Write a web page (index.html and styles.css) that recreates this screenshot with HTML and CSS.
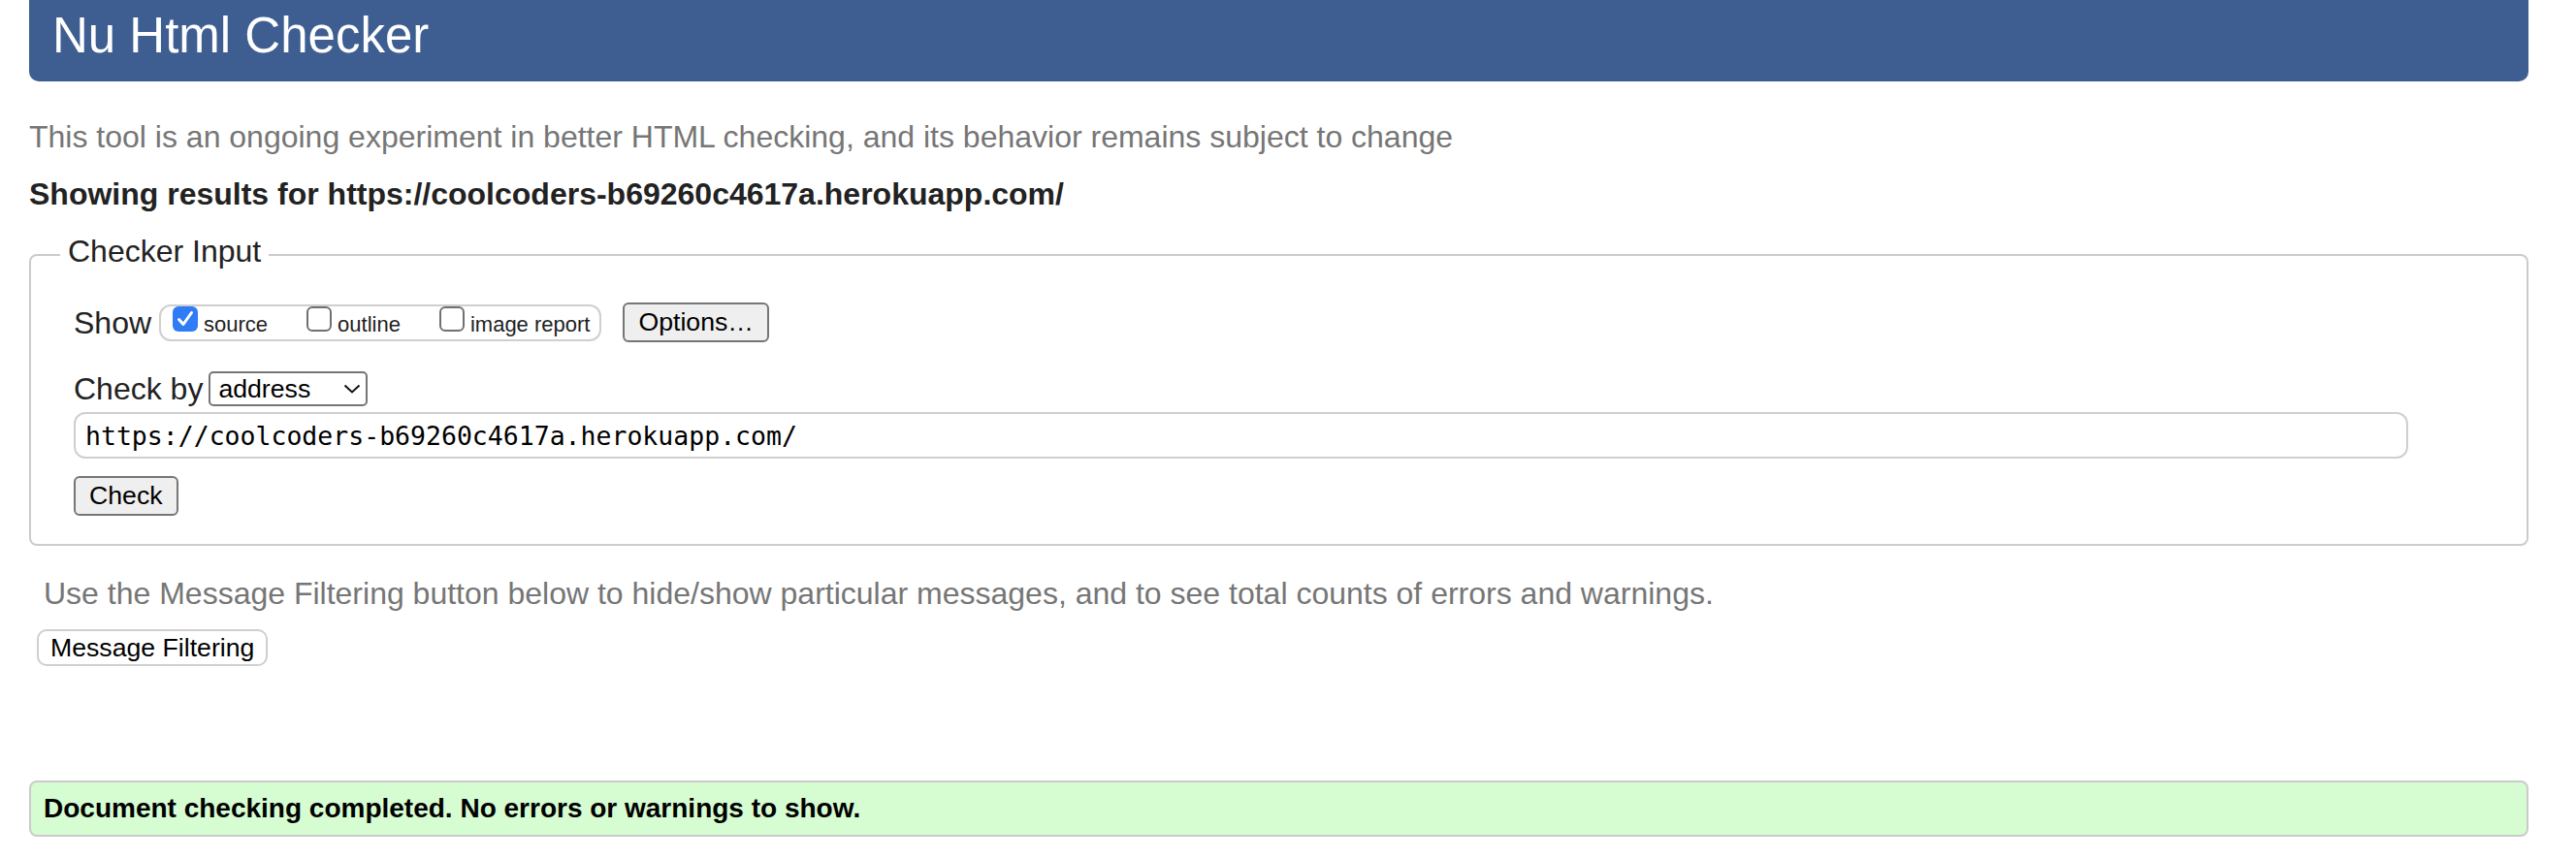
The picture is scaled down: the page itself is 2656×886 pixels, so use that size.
FILE: index.html
```html
<!DOCTYPE html>
<html lang="en">
<head>
<meta charset="utf-8">
<title>Nu Html Checker</title>
<link rel="stylesheet" href="styles.css">
</head>
<body>
<h1 class="title">Nu Html Checker</h1>
<p class="intro">This tool is an ongoing experiment in better HTML checking, and its behavior remains subject to change</p>
<p class="results-for">Showing results for https://coolcoders-b69260c4617a.herokuapp.com/</p>
<form class="checker">
  <fieldset class="input-box">
    <legend class="legend">Checker Input</legend>
    <div class="row show-row">
      <span class="row-label">Show</span>
      <div class="opts">
        <label class="opt"><span class="box box-on"><svg width="26" height="26" viewBox="0 0 26 26"><path d="M6.5 13.5 L11 18.5 L19.5 6.5" fill="none" stroke="#fff" stroke-width="3" stroke-linecap="round" stroke-linejoin="round"/></svg></span>source</label>
        <label class="opt"><span class="box"></span>outline</label>
        <label class="opt opt-last"><span class="box"></span>image report</label>
      </div>
      <button type="button" class="btn btn-options">Options…</button>
    </div>
    <div class="row by-row">
      <span class="row-label by-label">Check by</span>
      <span class="select-wrap">
        <select class="select"><option>address</option></select>
        <svg class="chev" width="18" height="10" viewBox="0 0 18 10"><path d="M1.5 1.5 L9 8.5 L16.5 1.5" fill="none" stroke="#111" stroke-width="2"/></svg>
      </span>
    </div>
    <input class="url" type="text" value="https://coolcoders-b69260c4617a.herokuapp.com/">
    <button type="button" class="btn btn-check">Check</button>
  </fieldset>
</form>
<p class="filter-hint">Use the Message Filtering button below to hide/show particular messages, and to see total counts of errors and warnings.</p>
<button type="button" class="btn-filter">Message Filtering</button>
<div class="success">Document checking completed. No errors or warnings to show.</div>
</body>
</html>
```
FILE: styles.css
```css
html, body {
  background: #fff;
}
body {
  margin: 0;
  padding: 0 49px 0 30px;
  font-family: "Liberation Sans", Arial, Helvetica, sans-serif;
  color: #222;
}
.title {
  margin: 0;
  height: 84px;
  box-sizing: border-box;
  padding: 8px 24px 18px;
  font-size: 51px;
  line-height: 58px;
  font-weight: normal;
  color: #fff;
  background: #3e5e92;
  border-radius: 0 0 10px 10px;
}
.intro {
  margin: 39px 0 0;
  font-size: 32px;
  line-height: 36px;
  color: #767676;
}
.results-for {
  margin: 23px 0 0;
  font-size: 32px;
  line-height: 36px;
  font-weight: bold;
  color: #222;
}
.checker {
  margin: 0;
}
.input-box {
  margin: 23px 0 0;
  padding: 0 122px 29px 44px;
  border: 2px solid #cbcbcb;
  border-radius: 8px;
  min-width: 0;
}
.legend {
  margin-left: -14px;
  padding: 0 8px 8px;
  font-size: 32px;
  line-height: 36px;
  color: #222;
}
.row {
  display: flex;
  align-items: center;
}
.show-row {
  margin-top: 27px;
}
.row-label {
  font-size: 32px;
  line-height: 36px;
  margin-right: 8px;
}
.by-label {
  margin-right: 6px;
}
.opts {
  display: flex;
  align-items: flex-start;
  height: 38px;
  box-sizing: border-box;
  padding: 0 10px 0 12px;
  border: 2px solid #cfcfcf;
  border-radius: 12px;
}
.opt {
  display: block;
  font-size: 22px;
  color: #222;
  margin-right: 40px;
  white-space: nowrap;
}
.opt-last {
  margin-right: 0;
}
.box {
  display: inline-block;
  vertical-align: baseline;
  width: 26px;
  height: 26px;
  box-sizing: border-box;
  margin-right: 6px;
  border: 2px solid #707070;
  border-radius: 6px;
  background: #fff;
}
.box-on {
  border: none;
  background: #2f7cf6;
}
.box-on svg {
  display: block;
}
.btn {
  font-family: "Liberation Sans", Arial, Helvetica, sans-serif;
  font-size: 26.67px;
  color: #000;
  background: #efefef;
  border: 2px solid #767676;
  border-radius: 6px;
  height: 41px;
  padding: 0 14px;
  line-height: 37px;
}
.btn-options {
  margin-left: 22px;
}
.by-row {
  margin-top: 30px;
}
.select-wrap {
  position: relative;
  display: inline-block;
}
.select {
  display: block;
  appearance: none;
  -webkit-appearance: none;
  width: 164px;
  height: 36px;
  box-sizing: border-box;
  padding: 0 0 0 8px;
  margin: 0;
  font-family: "Liberation Sans", Arial, Helvetica, sans-serif;
  font-size: 26.67px;
  color: #000;
  background: #fff;
  border: 2px solid #767676;
  border-radius: 5px;
}
.chev {
  position: absolute;
  right: 7px;
  top: 13px;
  pointer-events: none;
}
.url {
  display: block;
  width: 100%;
  height: 48px;
  box-sizing: border-box;
  margin: 6px 0 0;
  padding: 0 10px;
  font-family: "DejaVu Sans Mono", "Liberation Mono", monospace;
  font-size: 26.5px;
  color: #000;
  background: #fff;
  border: 2px solid #cfcfcf;
  border-radius: 12px;
  outline: none;
}
.btn-check {
  display: block;
  margin-top: 18px;
}
.filter-hint {
  margin: 31px 0 0;
  padding-left: 15px;
  font-size: 32px;
  line-height: 36px;
  color: #767676;
}
.btn-filter {
  display: block;
  margin: 19px 0 0 8px;
  height: 38px;
  padding: 0 12px;
  font-family: "Liberation Sans", Arial, Helvetica, sans-serif;
  font-size: 26.67px;
  line-height: 34px;
  color: #000;
  background: #fff;
  border: 2px solid #cfcfcf;
  border-radius: 10px;
}
.success {
  margin-top: 118px;
  padding: 11px 13px;
  font-size: 28px;
  line-height: 32px;
  font-weight: bold;
  color: #000;
  background: #d6fcd1;
  border: 2px solid #cbcbcb;
  border-radius: 8px;
}
```
